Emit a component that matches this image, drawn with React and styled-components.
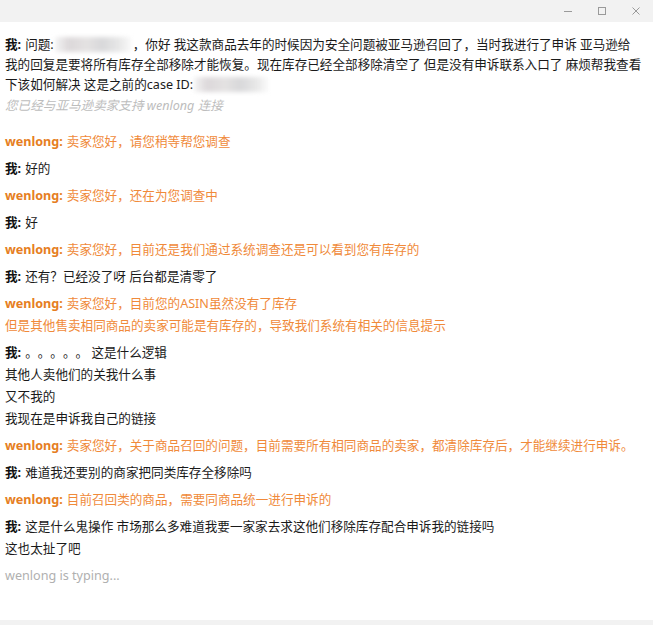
import React from "react";
import styled, { createGlobalStyle } from "styled-components";

const GlobalStyle = createGlobalStyle`
  html, body {
    margin: 0;
    padding: 0;
    background: #fff;
  }
`;

const Window = styled.div`
  width: 653px;
  height: 625px;
  display: flex;
  flex-direction: column;
  font-family: "Noto Sans", "Noto Sans CJK SC", sans-serif;
  font-size: 12.6px;
  text-spacing-trim: space-all;
  background: #fff;
`;

const TitleBar = styled.div`
  height: 22px;
  flex-shrink: 0;
  background: #f2f2f2;
  display: flex;
  justify-content: flex-end;
  align-items: center;
`;

const WinButton = styled.div`
  width: 34px;
  height: 22px;
  display: flex;
  align-items: center;
  justify-content: center;
  color: #9a9a9a;
`;

const ChatLog = styled.div`
  flex: 1;
  padding: 13px 8px 0 5px;
  overflow: hidden;
`;

const Message = styled.div`
  line-height: ${(p) => p.$lh || 22}px;
  margin-bottom: ${(p) => (p.$gap != null ? p.$gap : 5)}px;
  color: ${(p) => (p.$agent ? "#f08a3a" : "#1a1a1a")};
  white-space: nowrap;
`;

const Name = styled.b`
  color: ${(p) => (p.$agent ? "#e67e22" : "#111")};
  font-weight: 700;
  margin-right: 4px;
`;

const Notice = styled.div`
  line-height: 21px;
  color: #bdbdbd;
  font-style: italic;
  margin-bottom: 15px;
`;

const Typing = styled.div`
  line-height: 22px;
  color: #b0b0b0;
  margin-top: 2px;
`;

const Blur = styled.span`
  display: inline-block;
  vertical-align: middle;
  width: ${(p) => p.$w}px;
  height: 15px;
  margin: -3px 2px 0 1px;
  background: linear-gradient(
    90deg,
    rgba(225, 225, 225, 0.35),
    #dcd8da 18%,
    #e4e2e2 42%,
    #d8d8da 62%,
    #e6e6e6 82%,
    rgba(235, 235, 235, 0.3)
  );
  filter: blur(2px);
`;

const Redacted = ({ w }) => <Blur $w={w} />;

const Footer = styled.div`
  height: 5px;
  flex-shrink: 0;
  background: #f2f2f2;
`;

const Minimize = () => (
  <svg width="10" height="10" viewBox="0 0 10 10">
    <path d="M1 5.5h8" stroke="currentColor" strokeWidth="1" />
  </svg>
);

const Maximize = () => (
  <svg width="10" height="10" viewBox="0 0 10 10">
    <rect x="1.5" y="1.5" width="7" height="7" fill="none" stroke="currentColor" strokeWidth="1" />
  </svg>
);

const Close = () => (
  <svg width="10" height="10" viewBox="0 0 10 10">
    <path d="M1.5 1.5l7 7M8.5 1.5l-7 7" stroke="currentColor" strokeWidth="1" />
  </svg>
);

const me = (text) => ({ who: "me", text });
const agent = (text) => ({ who: "agent", text });

const messages = [
  agent(["卖家您好，请您稍等帮您调查"]),
  me(["好的"]),
  agent(["卖家您好，还在为您调查中"]),
  me(["好"]),
  agent(["卖家您好，目前还是我们通过系统调查还是可以看到您有库存的"]),
  me(["还有？已经没了呀 后台都是清零了"]),
  agent([
    "卖家您好，目前您的ASIN虽然没有了库存",
    "但是其他售卖相同商品的卖家可能是有库存的，导致我们系统有相关的信息提示",
  ]),
  me(["。。。。。 这是什么逻辑", "其他人卖他们的关我什么事", "又不我的", "我现在是申诉我自己的链接"]),
  agent(["卖家您好，关于商品召回的问题，目前需要所有相同商品的卖家，都清除库存后，才能继续进行申诉。"]),
  me(["难道我还要别的商家把同类库存全移除吗"]),
  agent(["目前召回类的商品，需要同商品统一进行申诉的"]),
  me(["这是什么鬼操作 市场那么多难道我要一家家去求这他们移除库存配合申诉我的链接吗", "这也太扯了吧"]),
];

const App = () => {
  return (
    <Window>
      <GlobalStyle />
      <TitleBar>
        <WinButton>
          <Minimize />
        </WinButton>
        <WinButton>
          <Maximize />
        </WinButton>
        <WinButton>
          <Close />
        </WinButton>
      </TitleBar>
      <ChatLog>
        <Message $gap={0} $lh={20}>
          <Name>我:</Name>问题:<Redacted w={76} />
          ，你好 我这款商品去年的时候因为安全问题被亚马逊召回了，当时我进行了申诉 亚马逊给
          <br />
          我的回复是要将所有库存全部移除才能恢复。现在库存已经全部移除清空了 但是没有申诉联系入口了 麻烦帮我查看
          <br />
          下该如何解决 这是之前的case ID:
          <Redacted w={74} />
        </Message>
        <Notice>您已经与亚马逊卖家支持 wenlong 连接</Notice>
        {messages.map((m, i) => {
          const isAgent = m.who === "agent";
          return (
            <Message key={i} $agent={isAgent}>
              <Name $agent={isAgent}>{isAgent ? "wenlong:" : "我:"}</Name>
              {m.text.map((line, j) => (
                <React.Fragment key={j}>
                  {j > 0 && <br />}
                  {line}
                </React.Fragment>
              ))}
            </Message>
          );
        })}
        <Typing>wenlong is typing...</Typing>
      </ChatLog>
      <Footer />
    </Window>
  );
};

export default App;
